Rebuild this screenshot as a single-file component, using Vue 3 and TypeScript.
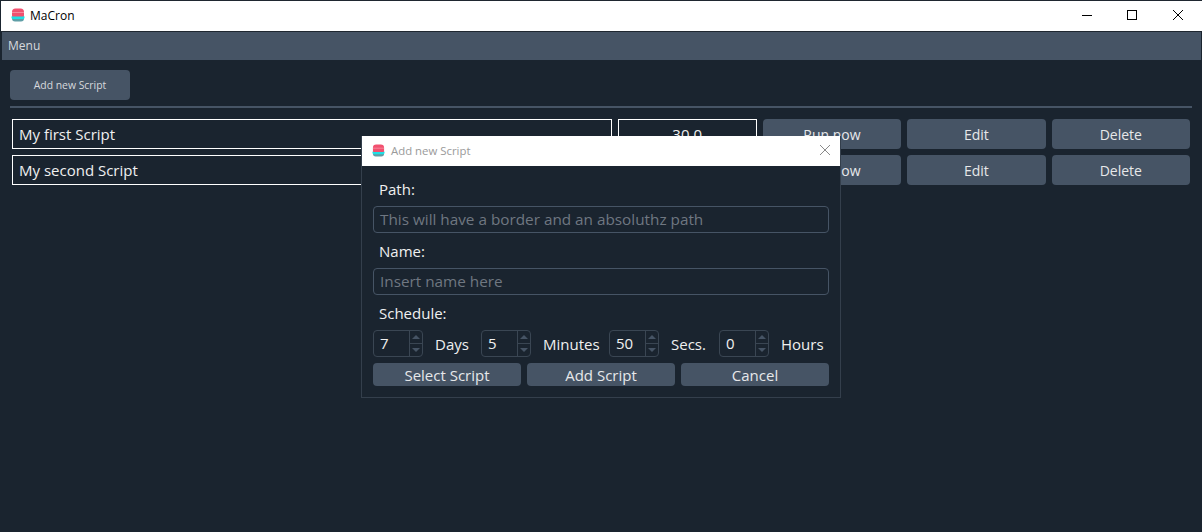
<template>
  <div class="window">
    <header class="titlebar">
      <svg class="app-icon" width="14" height="14" viewBox="0 0 14 14">
        <path d="M1 10h12v.500A3 3 0 0 1 10 13.500H4A3 3 0 0 1 1 10.500z" fill="#5f9ea6" />
        <rect x=".5" y="7.500" width="13" height="3.500" rx="1.500" fill="#1fe0e6" />
        <path d="M1 4a3.500 3.500 0 0 1 3.500-3.500h5A3.500 3.500 0 0 1 13 4v3.500a1 1 0 0 1-1 1H2a1 1 0 0 1-1-1z" fill="#f2506f" />
        <rect x="1" y="4" width="12" height="1" fill="#f58a9e" />
      </svg>
      <span class="app-name">MaCron</span>
      <div class="window-controls">
        <svg width="46" height="30" viewBox="0 0 46 30"><line x1="18" y1="15.500" x2="28" y2="15.500" stroke="#000" /></svg>
        <svg width="46" height="30" viewBox="0 0 46 30"><rect x="17.500" y="10.500" width="9" height="9" fill="none" stroke="#000" /></svg>
        <svg width="46" height="30" viewBox="0 0 46 30"><path d="M17 10l10 10M27 10L17 20" stroke="#000" fill="none" /></svg>
      </div>
    </header>
    <nav class="menubar">Menu</nav>
    <main class="content">
      <button class="btn add-btn">Add new Script</button>
      <div class="divider"></div>
      <div v-for="script in scripts" :key="script.name" class="script-row">
        <div class="field name-field">{{ script.name }}</div>
        <div class="field time-field">{{ script.time }}</div>
        <button class="btn row-btn">Run now</button>
        <button class="btn row-btn">Edit</button>
        <button class="btn row-btn">Delete</button>
      </div>
    </main>

    <section class="dialog">
      <header class="dialog-title">
        <svg class="app-icon" width="13" height="13" viewBox="0 0 14 14">
          <path d="M1 10h12v.500A3 3 0 0 1 10 13.500H4A3 3 0 0 1 1 10.500z" fill="#5f9ea6" />
          <rect x=".5" y="7.500" width="13" height="3.500" rx="1.500" fill="#1fe0e6" />
          <path d="M1 4a3.500 3.500 0 0 1 3.500-3.500h5A3.500 3.500 0 0 1 13 4v3.500a1 1 0 0 1-1 1H2a1 1 0 0 1-1-1z" fill="#f2506f" />
          <rect x="1" y="4" width="12" height="1" fill="#f58a9e" />
        </svg>
        <span class="dialog-name">Add new Script</span>
        <svg class="dialog-close" width="12" height="12" viewBox="0 0 12 12"><path d="M1 1l10 10M11 1L1 11" stroke="#8a8a8a" fill="none" /></svg>
      </header>
      <div class="dialog-body">
        <label class="label">Path:</label>
        <div class="text-input">This will have a border and an absoluthz path</div>
        <label class="label">Name:</label>
        <div class="text-input">Insert name here</div>
        <label class="label">Schedule:</label>
        <div class="schedule">
          <template v-for="s in schedule" :key="s.unit">
            <div class="spin">
              <span class="spin-value">{{ s.value }}</span>
              <span class="spin-arrows">
                <span class="arrow"><i class="up"></i></span>
                <span class="arrow"><i class="down"></i></span>
              </span>
            </div>
            <span class="unit" :style="{ width: s.width + 'px' }">{{ s.unit }}</span>
          </template>
        </div>
        <div class="dialog-actions">
          <button class="btn action-btn">Select Script</button>
          <button class="btn action-btn">Add Script</button>
          <button class="btn action-btn">Cancel</button>
        </div>
      </div>
    </section>
  </div>
</template>

<script setup lang="ts">
interface Script {
  name: string
  time: string
}

const scripts: Script[] = [
  { name: 'My first Script', time: '30.0' },
  { name: 'My second Script', time: '' }
]

// width is the label column next to each spin box
const schedule = [
  { value: 7, unit: 'Days', width: 34 },
  { value: 5, unit: 'Minutes', width: 54 },
  { value: 50, unit: 'Secs.', width: 36 },
  { value: 0, unit: 'Hours', width: 42 }
]
</script>

<style>
html,
body {
  margin: 0;
  background: #1a242f;
}
</style>

<style scoped>
.window {
  position: relative;
  width: 1202px;
  height: 532px;
  overflow: hidden;
  background: #1a242f;
  font-family: "Open Sans", "Noto Sans", sans-serif;
  color: #e6e8ea;
}

.titlebar {
  height: 28px;
  margin-left: 1px;
  background: #fff;
  display: flex;
  align-items: center;
  padding: 0 0 2px 10px;
  border-top: 1px solid #1f2730;
  border-bottom: 1px solid #1f2730;
}

.app-name {
  margin-left: 5px;
  font-size: 12px;
  color: #000;
}

.window-controls {
  margin-left: auto;
  display: flex;
}

.menubar {
  height: 28px;
  margin: 0 1px 0 2px;
  padding-left: 6px;
  background: #465465;
  font-size: 12px;
  line-height: 28px;
  color: #d6d9dd;
}

.content {
  padding: 10px 10px 0;
}

.btn {
  border: none;
  border-radius: 4px;
  background: #465465;
  color: #e6e8ea;
  font-family: inherit;
  padding: 0;
}

.add-btn {
  display: block;
  width: 120px;
  height: 30px;
  font-size: 10.400px;
  color: #d6d9dd;
}

.divider {
  height: 2px;
  margin: 6px 0 11px;
  background: #465465;
}

.script-row {
  display: flex;
  gap: 6px;
  margin: 0 2px 6px;
  height: 30px;
}

.field {
  box-sizing: border-box;
  border: 1px solid #fff;
  font-size: 15px;
  line-height: 28px;
  color: #f0f0f0;
}

.name-field {
  width: 600px;
  padding-left: 6px;
}

.time-field {
  width: 139px;
  text-align: center;
}

.row-btn {
  width: 138.500px;
  font-size: 14px;
}

.dialog {
  position: absolute;
  left: 361px;
  top: 136px;
  width: 480px;
  height: 262px;
  box-sizing: border-box;
  border: 1px solid #343f4c;
  border-top: none;
  background: #1a242f;
}

.dialog-title {
  height: 28px;
  background: #fff;
  display: flex;
  align-items: center;
  padding: 0 9px 2px 10px;
}

.dialog-name {
  margin-left: 6px;
  font-size: 11.400px;
  color: #9a9a9a;
}

.dialog-close {
  margin-left: auto;
}

.dialog-body {
  padding: 12px 11px 0;
}

.label {
  display: block;
  height: 22px;
  padding-left: 6px;
  font-size: 15px;
  line-height: 22px;
  color: #f0f0f0;
}

.text-input {
  box-sizing: border-box;
  height: 27px;
  margin: 6px 0 7px;
  padding-left: 6px;
  border: 1px solid #465465;
  border-radius: 4px;
  font-size: 15.300px;
  line-height: 25px;
  color: #6f7781;
}

.schedule {
  display: flex;
  align-items: center;
  height: 27px;
  margin-top: 6px;
}

.spin {
  box-sizing: border-box;
  flex: none;
  width: 50px;
  height: 27px;
  display: flex;
  border: 1px solid #3a4653;
  border-radius: 4px;
}

.spin-value {
  flex: 1;
  padding-left: 6px;
  font-size: 15px;
  line-height: 25px;
  color: #f0f0f0;
}

.spin-arrows {
  width: 12px;
  display: flex;
  flex-direction: column;
  border-left: 1px solid #3a4653;
}

.arrow {
  flex: 1;
  display: flex;
  align-items: center;
  justify-content: center;
}

.arrow + .arrow {
  border-top: 1px solid #3a4653;
}

.up,
.down {
  width: 0;
  height: 0;
  border-left: 4.500px solid transparent;
  border-right: 4.500px solid transparent;
}

.up {
  border-bottom: 4px solid #465465;
}

.down {
  border-top: 4px solid #465465;
}

.unit {
  flex: none;
  margin: 0 12px;
  font-size: 15px;
  white-space: nowrap;
  color: #f0f0f0;
}

.dialog-actions {
  display: flex;
  gap: 6px;
  margin-top: 6px;
}

.action-btn {
  width: 148px;
  height: 23px;
  font-size: 15px;
}
</style>
